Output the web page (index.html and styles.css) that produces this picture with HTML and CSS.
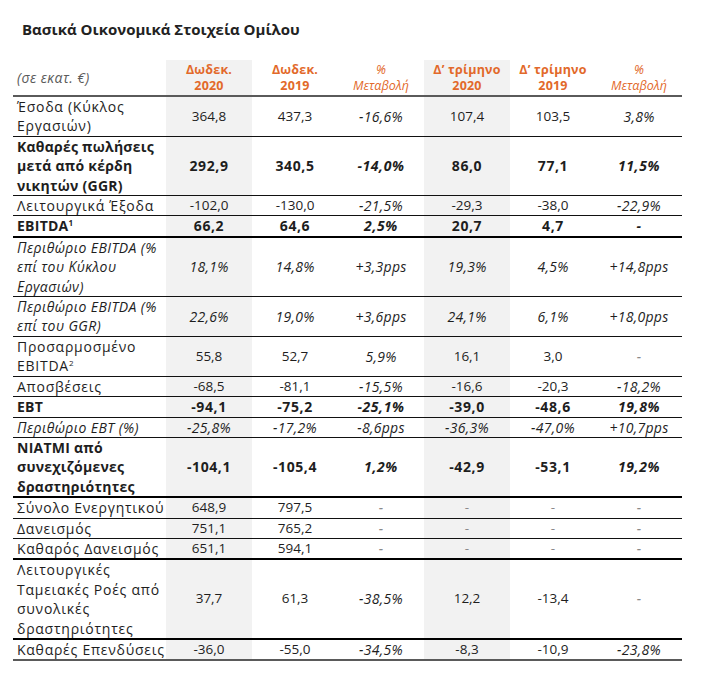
FILE: index.html
```html
<!DOCTYPE html>
<html lang="el">
<head>
<meta charset="utf-8">
<title>Βασικά Οικονομικά Στοιχεία Ομίλου</title>
<link rel="stylesheet" href="styles.css">
</head>
<body>
<div class="page">
  <h1 class="title">Βασικά Οικονομικά Στοιχεία Ομίλου</h1>
  <table class="fin">
    <colgroup>
      <col class="col-label">
      <col class="col-num"><col class="col-num"><col class="col-num">
      <col class="col-num"><col class="col-num"><col class="col-num">
    </colgroup>
    <thead>
      <tr>
        <th class="unit">(σε εκατ. €)</th>
        <th class="hd shade">Δωδεκ.<br>2020</th>
        <th class="hd">Δωδεκ.<br>2019</th>
        <th class="hd-pct">%<br>Μεταβολή</th>
        <th class="hd shade">Δ’ τρίμηνο<br>2020</th>
        <th class="hd">Δ’ τρίμηνο<br>2019</th>
        <th class="hd-pct">%<br>Μεταβολή</th>
      </tr>
    </thead>
    <tbody>
      <tr>
        <td class="lbl">Έσοδα (Κύκλος<br>Εργασιών)</td>
        <td class="shade">364,8</td><td>437,3</td><td class="pct">-16,6%</td>
        <td class="shade">107,4</td><td>103,5</td><td class="pct">3,8%</td>
      </tr>
      <tr class="bold">
        <td class="lbl">Καθαρές πωλήσεις<br>μετά από κέρδη<br>νικητών (GGR)</td>
        <td class="shade">292,9</td><td>340,5</td><td class="pct">-14,0%</td>
        <td class="shade">86,0</td><td>77,1</td><td class="pct">11,5%</td>
      </tr>
      <tr>
        <td class="lbl">Λειτουργικά Έξοδα</td>
        <td class="shade">-102,0</td><td>-130,0</td><td class="pct">-21,5%</td>
        <td class="shade">-29,3</td><td>-38,0</td><td class="pct">-22,9%</td>
      </tr>
      <tr class="bold thick">
        <td class="lbl">EBITDA<sup>1</sup></td>
        <td class="shade">66,2</td><td>64,6</td><td class="pct">2,5%</td>
        <td class="shade">20,7</td><td>4,7</td><td class="pct">-</td>
      </tr>
      <tr class="ital">
        <td class="lbl">Περιθώριο EBITDA (%<br>επί του Κύκλου<br>Εργασιών)</td>
        <td class="shade">18,1%</td><td>14,8%</td><td class="pct">+3,3pps</td>
        <td class="shade">19,3%</td><td>4,5%</td><td class="pct">+14,8pps</td>
      </tr>
      <tr class="ital">
        <td class="lbl">Περιθώριο EBITDA (%<br>επί του GGR)</td>
        <td class="shade">22,6%</td><td>19,0%</td><td class="pct">+3,6pps</td>
        <td class="shade">24,1%</td><td>6,1%</td><td class="pct">+18,0pps</td>
      </tr>
      <tr>
        <td class="lbl">Προσαρμοσμένο<br>EBITDA<sup>2</sup></td>
        <td class="shade">55,8</td><td>52,7</td><td class="pct">5,9%</td>
        <td class="shade">16,1</td><td>3,0</td><td class="pct dash">-</td>
      </tr>
      <tr>
        <td class="lbl">Αποσβέσεις</td>
        <td class="shade">-68,5</td><td>-81,1</td><td class="pct">-15,5%</td>
        <td class="shade">-16,6</td><td>-20,3</td><td class="pct">-18,2%</td>
      </tr>
      <tr class="bold">
        <td class="lbl">EBT</td>
        <td class="shade">-94,1</td><td>-75,2</td><td class="pct">-25,1%</td>
        <td class="shade">-39,0</td><td>-48,6</td><td class="pct">19,8%</td>
      </tr>
      <tr class="ital">
        <td class="lbl">Περιθώριο EBT (%)</td>
        <td class="shade">-25,8%</td><td>-17,2%</td><td class="pct">-8,6pps</td>
        <td class="shade">-36,3%</td><td>-47,0%</td><td class="pct">+10,7pps</td>
      </tr>
      <tr class="bold thick">
        <td class="lbl">NIATMI από<br>συνεχιζόμενες<br>δραστηριότητες</td>
        <td class="shade">-104,1</td><td>-105,4</td><td class="pct">1,2%</td>
        <td class="shade">-42,9</td><td>-53,1</td><td class="pct">19,2%</td>
      </tr>
      <tr>
        <td class="lbl">Σύνολο Ενεργητικού</td>
        <td class="shade">648,9</td><td>797,5</td><td class="pct dash">-</td>
        <td class="shade dash">-</td><td class="dash">-</td><td class="pct dash">-</td>
      </tr>
      <tr>
        <td class="lbl">Δανεισμός</td>
        <td class="shade">751,1</td><td>765,2</td><td class="pct dash">-</td>
        <td class="shade dash">-</td><td class="dash">-</td><td class="pct dash">-</td>
      </tr>
      <tr class="thick">
        <td class="lbl">Καθαρός Δανεισμός</td>
        <td class="shade">651,1</td><td>594,1</td><td class="pct dash">-</td>
        <td class="shade dash">-</td><td class="dash">-</td><td class="pct dash">-</td>
      </tr>
      <tr class="thick">
        <td class="lbl">Λειτουργικές<br>Ταμειακές Ροές από<br>συνολικές<br>δραστηριότητες</td>
        <td class="shade">37,7</td><td>61,3</td><td class="pct">-38,5%</td>
        <td class="shade">12,2</td><td>-13,4</td><td class="pct dash">-</td>
      </tr>
      <tr class="last">
        <td class="lbl">Καθαρές Επενδύσεις</td>
        <td class="shade">-36,0</td><td>-55,0</td><td class="pct">-34,5%</td>
        <td class="shade">-8,3</td><td>-10,9</td><td class="pct">-23,8%</td>
      </tr>
    </tbody>
  </table>
</div>
</body>
</html>
```

FILE: styles.css
```css
html, body {
  margin: 0;
  padding: 0;
  background: #ffffff;
}

body {
  font-family: "Open Sans", "DejaVu Sans", sans-serif;
  color: #1e1e1e;
}

.page {
  padding: 19px 0 0 13px;
}

.title {
  margin: 0 0 20px 9px;
  font-size: 15px;
  line-height: 21px;
  font-weight: 700;
  color: #222;
}

.fin {
  border-collapse: separate;
  border-spacing: 0;
  table-layout: fixed;
  width: 669px;
  font-size: 13.5px;
}

.col-label { width: 153px; }
.col-num { width: 86px; }

.fin th,
.fin td {
  padding: 0;
  text-align: center;
  vertical-align: middle;
}

.fin thead th {
  height: 34px;
  border-bottom: 2px solid #5a5a5a;
  font-size: 12.5px;
  line-height: 16px;
  color: #e2692a;
  vertical-align: bottom;
  padding-bottom: 1px;
}

.fin thead th.unit {
  text-align: left;
  padding-left: 4px;
  font-weight: 400;
  font-style: italic;
  color: #5a5a5a;
  font-size: 14px;
  letter-spacing: 0.4px;
  vertical-align: middle;
  padding-bottom: 0;
}

.fin thead th.hd {
  font-weight: 700;
  letter-spacing: 0.2px;
}

.fin thead th.hd-pct {
  font-weight: 400;
  font-style: italic;
}

.fin td {
  line-height: 19.4px;
  border-bottom: 1px solid #111;
}

.fin td.lbl {
  text-align: left;
  padding-left: 4px;
  white-space: nowrap;
  font-size: 14px;
  letter-spacing: 0.75px;
}

.shade {
  background: #f2f2f2;
}

.fin td.pct,
.ital td {
  font-style: italic;
  font-size: 14px;
  letter-spacing: 0.3px;
}

.fin .ital td.lbl {
  letter-spacing: 0.4px;
}

.fin .bold td {
  font-weight: 700;
  font-size: 14px;
  letter-spacing: 0.6px;
}

.fin .bold td.lbl {
  letter-spacing: 0.25px;
}

.thick td {
  border-bottom: 2px solid #000;
}

.last td {
  border-bottom: 2px solid #5a5a5a;
}

.dash {
  color: #8a8a8a;
}

.bold td.pct {
  color: #1e1e1e;
}

sup {
  font-size: 8px;
  line-height: 0;
  letter-spacing: 0;
  vertical-align: 5px;
}
```
